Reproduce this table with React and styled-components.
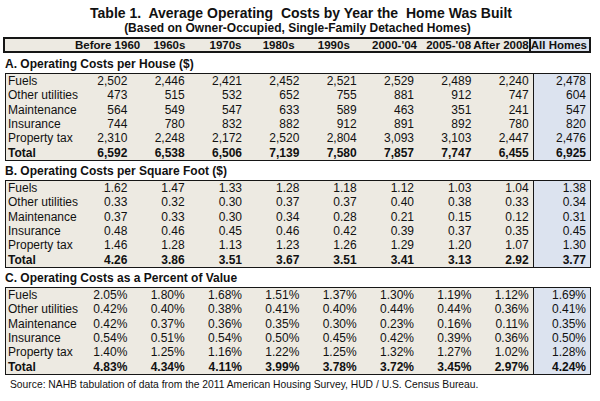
import React from "react";
import styled, { createGlobalStyle } from "styled-components";

const Global = createGlobalStyle`
  html, body { margin: 0; padding: 0; background: #ffffff; }
  body { font-family: "Liberation Sans", Arial, sans-serif; color: #111; }
`;

const BEIGE = "#edeae2";
const BLUE = "#dce3ef";
const INK = "#161616";

const Page = styled.div`
  width: 600px;
  height: 401px;
  box-sizing: border-box;
  padding: 7px 9px 0 3px;
  display: flex;
  flex-direction: column;
`;

const Title = styled.h1`
  margin: 0;
  font-size: 14px;
  line-height: 13px;
  font-weight: 700;
  text-align: center;
  white-space: pre;
  padding-left: 8px;
`;

const Subtitle = styled.h2`
  margin: 2px 0 0 0;
  font-size: 12px;
  line-height: 12px;
  font-weight: 700;
  text-align: center;
  padding-left: 1px;
`;

const HeaderBox = styled.div`
  margin-top: 3px;
  border: 2px solid ${INK};
  background: ${BEIGE};
  display: grid;
  grid-template-columns: 70px repeat(9, 1fr);
  height: 12px;
`;

const HeadCell = styled.div`
  font-size: 11.5px;
  line-height: 12px;
  font-weight: 700;
  text-align: right;
  white-space: nowrap;
  padding-right: ${(p) => p.$pad}px;
  ${(p) =>
    p.$all &&
    `background: ${BLUE}; border-left: 2px solid ${INK};`}
`;

const Section = styled.section`
  margin-left: 2px;
  display: flex;
  flex-direction: column;
  &:first-of-type h3 { margin-top: 4px; }
`;

const Heading = styled.h3`
  margin: 3px 0 2px 0;
  font-size: 12px;
  line-height: 14px;
  font-weight: 700;
`;

const Table = styled.div`
  border: 1.5px solid ${INK};
  background: ${BEIGE};
  display: flex;
  flex-direction: column;
`;

const Row = styled.div`
  display: grid;
  grid-template-columns: 68px repeat(9, 1fr);
  height: 14.33px;
  font-size: 12px;
  line-height: 14.33px;
  font-weight: ${(p) => (p.$total ? 700 : 400)};
`;

const Label = styled.div`
  padding-left: 2px;
  white-space: nowrap;
`;

const Num = styled.div`
  text-align: right;
  padding-right: 4px;
  white-space: nowrap;
  ${(p) =>
    p.$all &&
    `background: ${BLUE}; border-left: 1.5px solid ${INK};`}
`;

const Source = styled.p`
  margin: 3px 0 0 0;
  font-size: 10.3px;
  line-height: 14px;
  padding-left: 7px;
`;

const headers = [
  ["Before 1960", 2],
  ["1960s", 12],
  ["1970s", 11],
  ["1980s", 13],
  ["1990s", 13],
  ["2000-'04", 1],
  ["2005-'08", 2],
  ["After 2008", 0],
  ["All Homes", 2],
];

const labels = [
  "Fuels",
  "Other utilities",
  "Maintenance",
  "Insurance",
  "Property tax",
  "Total",
];

const sections = [
  {
    title: "A. Operating Costs per House ($)",
    rows: [
      ["2,502", "2,446", "2,421", "2,452", "2,521", "2,529", "2,489", "2,240", "2,478"],
      ["473", "515", "532", "652", "755", "881", "912", "747", "604"],
      ["564", "549", "547", "633", "589", "463", "351", "241", "547"],
      ["744", "780", "832", "882", "912", "891", "892", "780", "820"],
      ["2,310", "2,248", "2,172", "2,520", "2,804", "3,093", "3,103", "2,447", "2,476"],
      ["6,592", "6,538", "6,506", "7,139", "7,580", "7,857", "7,747", "6,455", "6,925"],
    ],
  },
  {
    title: "B. Operating Costs per Square Foot ($)",
    rows: [
      ["1.62", "1.47", "1.33", "1.28", "1.18", "1.12", "1.03", "1.04", "1.38"],
      ["0.33", "0.32", "0.30", "0.37", "0.37", "0.40", "0.38", "0.33", "0.34"],
      ["0.37", "0.33", "0.30", "0.34", "0.28", "0.21", "0.15", "0.12", "0.31"],
      ["0.48", "0.46", "0.45", "0.46", "0.42", "0.39", "0.37", "0.35", "0.45"],
      ["1.46", "1.28", "1.13", "1.23", "1.26", "1.29", "1.20", "1.07", "1.30"],
      ["4.26", "3.86", "3.51", "3.67", "3.51", "3.41", "3.13", "2.92", "3.77"],
    ],
  },
  {
    title: "C. Operating Costs as a Percent of Value",
    rows: [
      ["2.05%", "1.80%", "1.68%", "1.51%", "1.37%", "1.30%", "1.19%", "1.12%", "1.69%"],
      ["0.42%", "0.40%", "0.38%", "0.41%", "0.40%", "0.44%", "0.44%", "0.36%", "0.41%"],
      ["0.42%", "0.37%", "0.36%", "0.35%", "0.30%", "0.23%", "0.16%", "0.11%", "0.35%"],
      ["0.54%", "0.51%", "0.54%", "0.50%", "0.45%", "0.42%", "0.39%", "0.36%", "0.50%"],
      ["1.40%", "1.25%", "1.16%", "1.22%", "1.25%", "1.32%", "1.27%", "1.02%", "1.28%"],
      ["4.83%", "4.34%", "4.11%", "3.99%", "3.78%", "3.72%", "3.45%", "2.97%", "4.24%"],
    ],
  },
];

export default function App() {
  return (
    <>
      <Global />
      <Page>
        <Title>{"Table 1.  Average Operating  Costs by Year the  Home Was Built"}</Title>
        <Subtitle>(Based on Owner-Occupied, Single-Family Detached Homes)</Subtitle>
        <HeaderBox>
          <div />
          {headers.map(([h, pad], i) => (
            <HeadCell key={h} $pad={pad} $all={i === 8}>
              {h}
            </HeadCell>
          ))}
        </HeaderBox>
        {sections.map((s) => (
          <Section key={s.title}>
            <Heading>{s.title}</Heading>
            <Table>
              {s.rows.map((r, ri) => (
                <Row key={ri} $total={ri === 5}>
                  <Label>{labels[ri]}</Label>
                  {r.map((v, ci) => (
                    <Num key={ci} $all={ci === 8}>
                      {v}
                    </Num>
                  ))}
                </Row>
              ))}
            </Table>
          </Section>
        ))}
        <Source>
          Source: NAHB tabulation of data from the 2011 American Housing Survey, HUD / U.S. Census Bureau.
        </Source>
      </Page>
    </>
  );
}
